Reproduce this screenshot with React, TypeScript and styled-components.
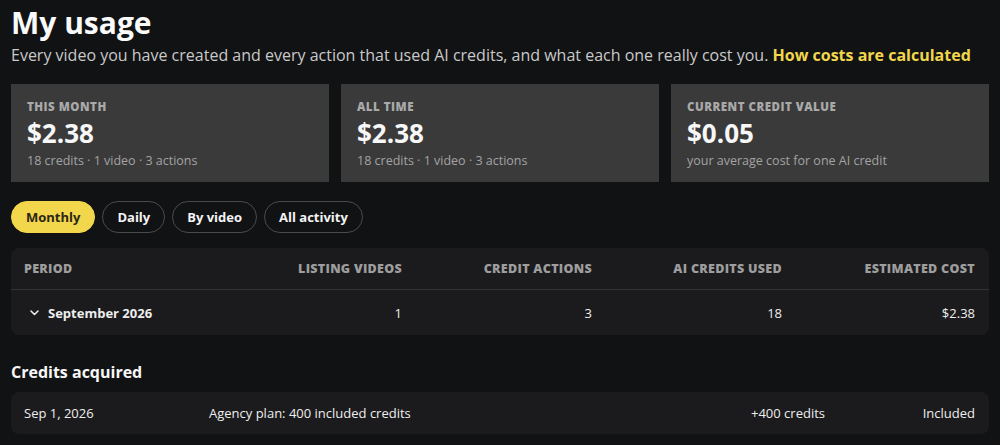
import { styled, createGlobalStyle } from 'styled-components';

const GlobalStyle = createGlobalStyle`
	html, body {
		margin: 0;
		background: #111214;
	}
	body {
		font-family: 'Open Sans', 'Liberation Sans', sans-serif;
		color: #f2f2f2;
	}
`;

const Page = styled.div`
	padding: 2px 11px 0;
	display: flex;
	flex-flow: column nowrap;
`;

const Title = styled.h1`
	margin: 0;
	font-size: 30px;
	font-weight: 700;
	line-height: 41px;
	color: #fafafa;
`;

const Subtitle = styled.p`
	margin: 0;
	font-size: 16px;
	line-height: 24px;
	color: #c9c9c9;
`;

const HelpLink = styled.a`
	color: #f2d64b;
	font-weight: 700;
	text-decoration: none;
`;

const StatGrid = styled.div`
	display: grid;
	grid-template-columns: repeat(3, 1fr);
	gap: 12px;
	margin-top: 17px;
`;

const StatCard = styled.div`
	background: #3a3a3b;
	height: 98px;
	padding: 14px 16px 0;
	box-sizing: border-box;
`;

const StatLabel = styled.div`
	font-size: 11.5px;
	font-weight: 800;
	letter-spacing: 0.5px;
	text-transform: uppercase;
	color: #a9a9a9;
	line-height: 17px;
`;

const StatValue = styled.div`
	font-size: 26px;
	font-weight: 700;
	line-height: 36px;
	color: #f7f7f7;
`;

const StatNote = styled.div`
	font-size: 12.5px;
	line-height: 18px;
	color: #a3a3a3;
	margin-top: 1px;
`;

const Tabs = styled.div`
	display: flex;
	gap: 7px;
	margin-top: 19px;
`;

const Tab = styled.button<{ $active?: boolean }>`
	height: 32px;
	padding: 0 14px;
	border-radius: 16px;
	font-family: inherit;
	font-size: 13px;
	font-weight: 700;
	border: 1px solid ${(p) => (p.$active ? '#f2d64b' : '#4a4a4c')};
	background: ${(p) => (p.$active ? '#f2d64b' : 'transparent')};
	color: ${(p) => (p.$active ? '#2a2714' : '#f4f4f4')};
	cursor: pointer;
`;

const Panel = styled.div`
	background: #1b1b1d;
	border-radius: 8px;
	margin-top: 15px;
	overflow: hidden;
`;

const TableRow = styled.div<{ $head?: boolean }>`
	display: grid;
	grid-template-columns: 1fr 190px 190px 190px 193px;
	align-items: center;
	padding: 0 14px 0 13px;
	height: ${(p) => (p.$head ? '41px' : '45px')};
	border-bottom: ${(p) => (p.$head ? '1px solid #343436' : 'none')};
`;

const HeadCell = styled.div<{ $right?: boolean }>`
	font-size: 12.5px;
	font-weight: 800;
	letter-spacing: 0.3px;
	text-transform: uppercase;
	color: #9e9e9e;
	text-align: ${(p) => (p.$right ? 'right' : 'left')};
`;

const Cell = styled.div<{ $right?: boolean; $bold?: boolean }>`
	font-size: 13px;
	font-weight: ${(p) => (p.$bold ? 700 : 400)};
	color: #eeeeee;
	display: flex;
	align-items: center;
	justify-content: ${(p) => (p.$right ? 'flex-end' : 'flex-start')};
`;

const Chevron = styled.svg`
	margin: 0 9px 0 6px;
`;

const SectionTitle = styled.h2`
	margin: 25px 0 0;
	font-size: 16px;
	font-weight: 700;
	line-height: 24px;
	color: #f7f7f7;
`;

const CreditRow = styled.div`
	display: grid;
	grid-template-columns: 185px 1fr 180px 150px;
	align-items: center;
	height: 42px;
	padding: 0 14px 0 13px;
	margin-top: 8px;
	background: #1b1b1d;
	border-radius: 8px;
`;

const stats = [
	{ label: 'This month', value: '$2.38', note: '18 credits · 1 video · 3 actions' },
	{ label: 'All time', value: '$2.38', note: '18 credits · 1 video · 3 actions' },
	{ label: 'Current credit value', value: '$0.05', note: 'your average cost for one AI credit' }
];

const tabs = ['Monthly', 'Daily', 'By video', 'All activity'];

export default function App() {
	return (
		<>
			<GlobalStyle />
			<Page>
				<Title>My usage</Title>
				<Subtitle>
					Every video you have created and every action that used AI credits, and what each one
					really cost you. <HelpLink href="#">How costs are calculated</HelpLink>
				</Subtitle>

				<StatGrid>
					{stats.map((s) => (
						<StatCard key={s.label}>
							<StatLabel>{s.label}</StatLabel>
							<StatValue>{s.value}</StatValue>
							<StatNote>{s.note}</StatNote>
						</StatCard>
					))}
				</StatGrid>

				<Tabs>
					{tabs.map((t, i) => (
						<Tab key={t} $active={i === 0}>
							{t}
						</Tab>
					))}
				</Tabs>

				<Panel>
					<TableRow $head>
						<HeadCell>Period</HeadCell>
						<HeadCell $right>Listing videos</HeadCell>
						<HeadCell $right>Credit actions</HeadCell>
						<HeadCell $right>AI credits used</HeadCell>
						<HeadCell $right>Estimated cost</HeadCell>
					</TableRow>
					<TableRow>
						<Cell $bold>
							<Chevron width="9" height="6" viewBox="0 0 9 6" fill="none">
								<path d="M1 1l3.5 3.5L8 1" stroke="#eeeeee" strokeWidth="1.5" strokeLinecap="round" strokeLinejoin="round" />
							</Chevron>
							September 2026
						</Cell>
						<Cell $right>1</Cell>
						<Cell $right>3</Cell>
						<Cell $right>18</Cell>
						<Cell $right>$2.38</Cell>
					</TableRow>
				</Panel>

				<SectionTitle>Credits acquired</SectionTitle>
				<CreditRow>
					<Cell>Sep 1, 2026</Cell>
					<Cell>Agency plan: 400 included credits</Cell>
					<Cell $right>+400 credits</Cell>
					<Cell $right>Included</Cell>
				</CreditRow>
			</Page>
		</>
	);
}
